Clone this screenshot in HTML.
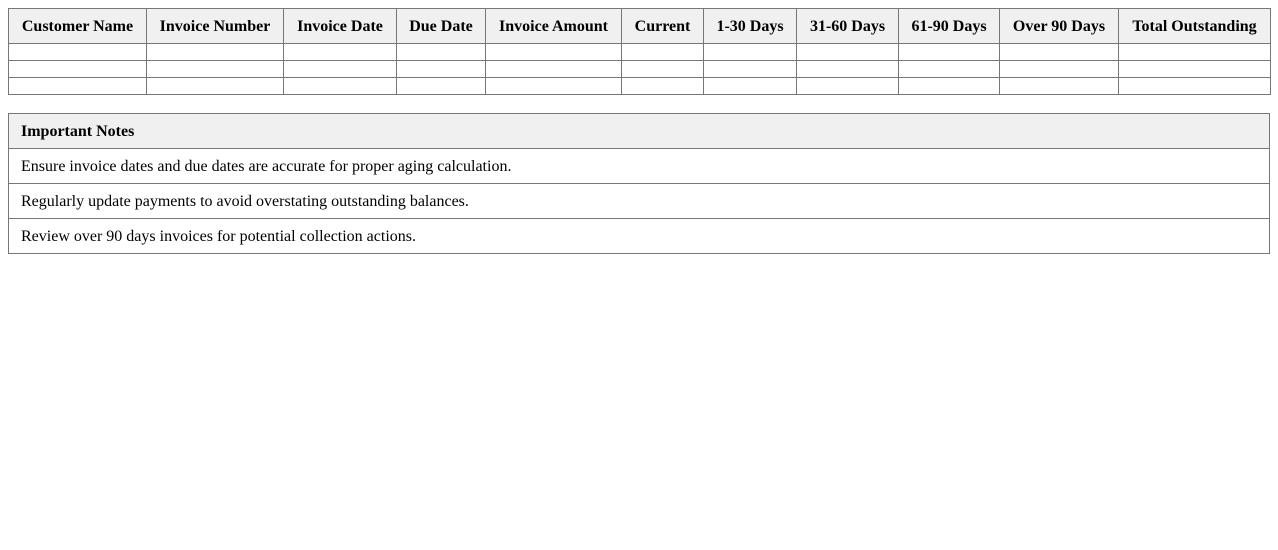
<!DOCTYPE html>
<html><head><meta charset="utf-8"><style>
body{margin:8px;font-family:"Liberation Serif",serif;font-size:16px;color:#000;background:#fff}
table{border-collapse:collapse;width:1262px;table-layout:fixed}
td,th{border:1px solid #777;padding:9px 12px 7px;text-align:left;line-height:18px}
th{background:#f0f0f0;font-weight:bold;text-align:center;white-space:nowrap}
.t1 td{height:0;padding:8px 12px;line-height:0}
.t2{margin-top:18px}
.t2 th{text-align:left}
</style></head><body>
<table class="t1">
<colgroup><col style="width:138px"><col style="width:137px"><col style="width:113px"><col style="width:89px"><col style="width:136px"><col style="width:82px"><col style="width:93px"><col style="width:102px"><col style="width:101px"><col style="width:119px"><col style="width:152px"></colgroup>
<tr><th>Customer Name</th><th>Invoice Number</th><th>Invoice Date</th><th>Due Date</th><th>Invoice Amount</th><th>Current</th><th>1-30 Days</th><th>31-60 Days</th><th>61-90 Days</th><th>Over 90 Days</th><th>Total Outstanding</th></tr>
<tr><td></td><td></td><td></td><td></td><td></td><td></td><td></td><td></td><td></td><td></td><td></td></tr>
<tr><td></td><td></td><td></td><td></td><td></td><td></td><td></td><td></td><td></td><td></td><td></td></tr>
<tr><td></td><td></td><td></td><td></td><td></td><td></td><td></td><td></td><td></td><td></td><td></td></tr>
</table>
<table class="t2">
<tr><th>Important Notes</th></tr>
<tr><td>Ensure invoice dates and due dates are accurate for proper aging calculation.</td></tr>
<tr><td>Regularly update payments to avoid overstating outstanding balances.</td></tr>
<tr><td>Review over 90 days invoices for potential collection actions.</td></tr>
</table>
</body></html>
